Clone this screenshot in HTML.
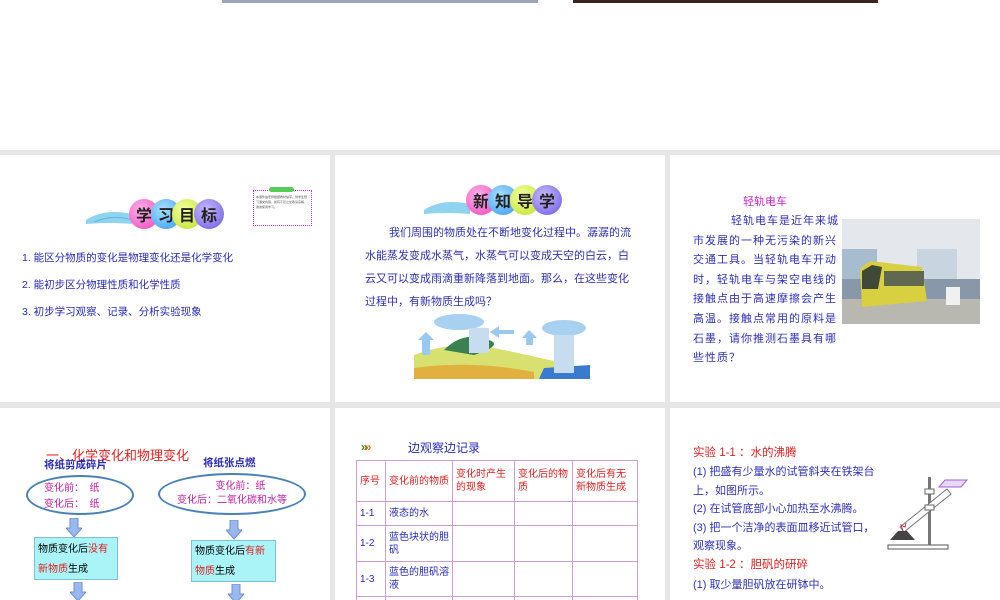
<!DOCTYPE html>
<html style="width:1000px;height:600px;overflow:hidden"><head><meta charset="utf-8">
<style>
*{margin:0;padding:0;box-sizing:border-box}
body{width:1000px;height:600px;background:#e6e6e6;position:relative;overflow:hidden;font-family:"Liberation Sans","Noto Sans CJK SC",sans-serif}
.s{position:absolute;background:#fff;overflow:hidden}
.a{position:absolute;white-space:nowrap}
.blue{color:#2a2ab8}
.red{color:#e02020}
.ball{position:absolute;width:30px;height:30px;border-radius:50%;font-size:16px;font-weight:bold;color:#222;text-align:center;line-height:30px;font-family:"Noto Sans CJK SC",sans-serif}
table{table-layout:fixed}
td{border:1px solid #c8a0d0;vertical-align:middle;padding:0 3px;font-size:10px;line-height:13px;white-space:normal;overflow:hidden}
</style></head><body>
<div class="s" style="left:0;top:0;width:1000px;height:150px"></div>
<div class="a" style="left:222px;top:0;width:316px;height:3px;background:#9aa6b8"></div>
<div class="a" style="left:573px;top:0;width:305px;height:3px;background:#3a2420"></div>

<!-- slide1 -->
<div class="s" style="left:0;top:155px;width:330px;height:247px"></div>
<svg class="a" style="left:84px;top:200px" width="50" height="30"><path d="M2 20 Q20 8 48 14 L48 24 Q25 22 2 24Z" fill="#8fd3ef"/><path d="M10 22 Q30 14 48 20" stroke="#5ab8e0" fill="none"/></svg>
<div class="ball" style="left:129px;top:199px;background:radial-gradient(circle at 40% 35%,#ffb0e8,#ee44bb)">学</div>
<div class="ball" style="left:151px;top:199px;background:radial-gradient(circle at 40% 35%,#a8e0ff,#3399ee)">习</div>
<div class="ball" style="left:172px;top:199px;background:radial-gradient(circle at 40% 35%,#f4ffa0,#bde022)">目</div>
<div class="ball" style="left:194px;top:199px;background:radial-gradient(circle at 40% 35%,#c8b8ff,#6a5ae0)">标</div>
<div class="a" style="left:253px;top:190px;width:59px;height:36px;border:1px dotted #cc33cc;font-size:3px;line-height:5px;color:#555;padding:4px 2px;white-space:normal">本课件由老师根据教材编写，供学生预习课文内容，如有不足之处敬请谅解，谢谢使用学习。</div>
<div class="a" style="left:269px;top:187px;width:25px;height:5px;background:#5c5;border-radius:3px"></div>
<div class="a blue" style="left:22px;top:250px;font-size:10.5px">1. 能区分物质的变化是物理变化还是化学变化</div>
<div class="a blue" style="left:22px;top:277px;font-size:10.5px">2. 能初步区分物理性质和化学性质</div>
<div class="a blue" style="left:22px;top:304px;font-size:10.5px">3. 初步学习观察、记录、分析实验现象</div>

<!-- slide2 -->
<div class="s" style="left:335px;top:155px;width:330px;height:247px"></div>
<svg class="a" style="left:422px;top:190px" width="50" height="30"><path d="M2 20 Q20 8 48 14 L48 24 Q25 22 2 24Z" fill="#8fd3ef"/></svg>
<div class="ball" style="left:466px;top:185px;background:radial-gradient(circle at 40% 35%,#ffb0e8,#ee44bb)">新</div>
<div class="ball" style="left:488px;top:185px;background:radial-gradient(circle at 40% 35%,#a8e0ff,#3399ee)">知</div>
<div class="ball" style="left:510px;top:185px;background:radial-gradient(circle at 40% 35%,#f4ffa0,#bde022)">导</div>
<div class="ball" style="left:532px;top:185px;background:radial-gradient(circle at 40% 35%,#c8b8ff,#6a5ae0)">学</div>
<div class="a" style="left:365px;top:222px;width:268px;font-size:11px;line-height:23px;white-space:normal;text-indent:24px;color:#3030b0">我们周围的物质处在不断地变化过程中。潺潺的流水能蒸发变成水蒸气，水蒸气可以变成天空的白云，白云又可以变成雨滴重新降落到地面。那么，在这些变化过程中，有新物质生成吗？</div>
<svg class="a" style="left:414px;top:310px" width="176" height="69">
<rect width="176" height="69" fill="#fff"/>
<path d="M0 45 Q40 30 80 38 Q130 48 176 60 L176 69 L0 69Z" fill="#d8e070"/>
<path d="M0 58 Q60 50 120 62 L120 69 L0 69Z" fill="#e0b040"/>
<path d="M130 58 L176 55 L176 69 L125 69Z" fill="#3a7ad0"/>
<path d="M30 40 Q50 20 75 30 Q90 35 60 45Z" fill="#3a8050"/>
<ellipse cx="45" cy="12" rx="25" ry="8" fill="#a8d0f0"/>
<ellipse cx="150" cy="18" rx="22" ry="8" fill="#a8d0f0"/>
<rect x="55" y="18" width="20" height="25" fill="#c8dcf0"/>
<rect x="140" y="25" width="20" height="38" fill="#c8dcf0"/>
<path d="M8 45 V30 H4 L12 22 L20 30 H16 V45Z" fill="#9ac8f0"/>
<path d="M112 35 V28 H108 L115 20 L123 28 H119 V35Z" fill="#9ac8f0"/>
<path d="M100 20 H85 V16 L76 22 L85 28 V24 H100Z" fill="#9ac8f0"/>
</svg>

<!-- slide3 -->
<div class="s" style="left:670px;top:155px;width:330px;height:247px"></div>
<div class="a" style="left:743px;top:193px;font-size:11px;color:#cc22cc">轻轨电车</div>
<div class="a" style="left:693px;top:212px;width:147px;font-size:11px;letter-spacing:1px;line-height:19.6px;white-space:normal;text-indent:38px;color:#3030b8">轻轨电车是近年来城市发展的一种无污染的新兴交通工具。当轻轨电车开动时，轻轨电车与架空电线的接触点由于高速摩擦会产生高温。接触点常用的原料是石墨，请你推测石墨具有哪些性质？</div>
<svg class="a" style="left:842px;top:219px" width="138" height="105">
<rect width="138" height="105" fill="#e4e8ec"/>
<rect x="0" y="30" width="35" height="45" fill="#a8bcd0"/>
<rect x="75" y="30" width="40" height="40" fill="#c8d4e0"/>
<rect x="0" y="60" width="138" height="20" fill="#8898a8"/>
<rect x="0" y="80" width="138" height="25" fill="#b8b8b0"/>
<path d="M18 50 L28 42 L80 48 L85 82 L20 88 Z" fill="#d8d040"/>
<path d="M20 52 L30 46 L40 48 L36 70 L20 70Z" fill="#404838"/>
<rect x="42" y="52" width="40" height="15" fill="#606850"/>
<rect x="104" y="68" width="14" height="18" fill="#f0f0f0"/>
</svg>

<!-- slide4 -->
<div class="s" style="left:0;top:408px;width:330px;height:192px"></div>
<div class="a" style="left:46px;top:445px;font-size:13px;color:#e82020">一、化学变化和物理变化</div>
<div class="a" style="left:44px;top:457px;font-size:10.5px;color:#2a2ab8;font-weight:bold">将纸剪成碎片</div>
<div class="a" style="left:203px;top:455px;font-size:10.5px;color:#2a2ab8;font-weight:bold">将纸张点燃</div>
<div class="a" style="left:26px;top:475px;width:108px;height:40px;border:2px solid #4a80b8;border-radius:50%"></div>
<div class="a" style="left:44px;top:481px;font-size:10px;line-height:16px;color:#c020a0">变化前：&nbsp;&nbsp;纸<br>变化后：&nbsp;&nbsp;纸</div>
<div class="a" style="left:158px;top:473px;width:148px;height:42px;border:2px solid #4a80b8;border-radius:50%"></div>
<div class="a" style="left:177px;top:480px;font-size:10px;line-height:14px;color:#c020a0;text-align:center">&nbsp;&nbsp;&nbsp;&nbsp;&nbsp;&nbsp;变化前：纸<br>变化后：二氧化碳和水等</div>
<svg class="a" style="left:66px;top:518px" width="16" height="20"><path d="M4 0 H12 V10 H16 L8 19 L0 10 H4Z" fill="#9ab8f0" stroke="#7090d0"/></svg>
<svg class="a" style="left:226px;top:520px" width="16" height="20"><path d="M4 0 H12 V10 H16 L8 19 L0 10 H4Z" fill="#9ab8f0" stroke="#7090d0"/></svg>
<div class="a" style="left:34px;top:537px;width:84px;height:43px;background:#aaf4f8;border:1px solid #80c0d0;font-size:10px;line-height:20px;padding:2px 3px;white-space:normal">物质变化后<span class="red">没有新物质</span>生成</div>
<div class="a" style="left:191px;top:540px;width:85px;height:42px;background:#aaf4f8;border:1px solid #80c0d0;font-size:10px;line-height:20px;padding:1px 3px;white-space:normal">物质变化后<span class="red">有新物质</span>生成</div>
<svg class="a" style="left:70px;top:582px" width="16" height="18"><path d="M4 0 H12 V10 H16 L8 19 L0 10 H4Z" fill="#9ab8f0" stroke="#7090d0"/></svg>
<svg class="a" style="left:228px;top:584px" width="16" height="16"><path d="M4 0 H12 V10 H16 L8 19 L0 10 H4Z" fill="#9ab8f0" stroke="#7090d0"/></svg>

<!-- slide5 -->
<div class="s" style="left:335px;top:408px;width:330px;height:192px">
<div class="a" style="left:26px;top:32px;font-size:12px;font-weight:bold;color:#e07010;letter-spacing:-3px"><span style="color:#408030">»</span>»</div>
<div class="a" style="left:73px;top:31px;font-size:12px;color:#2a2ab8">边观察边记录</div>
<table class="a" style="left:21px;top:52px;border-collapse:collapse;width:281px">
<colgroup><col style="width:29px"><col style="width:67px"><col style="width:62px"><col style="width:58px"><col style="width:65px"></colgroup>
<tr style="height:41px"><td class="red">序号</td><td class="red">变化前的物质</td><td class="red">变化时产生的现象</td><td class="red">变化后的物质</td><td class="red">变化后有无新物质生成</td></tr>
<tr style="height:24px"><td class="blue">1-1</td><td class="blue">液态的水</td><td></td><td></td><td></td></tr>
<tr style="height:36px"><td class="blue">1-2</td><td class="blue">蓝色块状的胆矾</td><td></td><td></td><td></td></tr>
<tr style="height:35px"><td class="blue">1-3</td><td class="blue">蓝色的胆矾溶液</td><td></td><td></td><td></td></tr>
<tr style="height:20px"><td></td><td></td><td></td><td></td><td></td></tr>
</table>
</div>

<!-- slide6 -->
<div class="s" style="left:670px;top:408px;width:330px;height:192px"></div>
<div class="a red" style="left:693px;top:444px;font-size:11.5px">实验 1-1 ：水的沸腾</div>
<div class="a" style="left:693px;top:463px;font-size:11px;line-height:18.5px;color:#3030b8">(1) 把盛有少量水的试管斜夹在铁架台<br>上，如图所示。<br>(2) 在试管底部小心加热至水沸腾。<br>(3) 把一个洁净的表面皿移近试管口，<br>观察现象。</div>
<div class="a red" style="left:693px;top:556px;font-size:11.5px">实验 1-2 ：胆矾的研碎</div>
<div class="a" style="left:693px;top:576px;font-size:11px;color:#3030b8">(1) 取少量胆矾放在研钵中。</div>
<svg class="a" style="left:885px;top:475px" width="90" height="80">
<rect x="3" y="70" width="60" height="4" fill="none" stroke="#555"/>
<rect x="43" y="2" width="3" height="68" fill="#777"/>
<path d="M15 52 L62 14 L66 19 L19 57Z" fill="#fff" stroke="#777"/>
<rect x="40" y="30" width="9" height="5" fill="#fff" stroke="#666"/>
<rect x="40" y="14" width="9" height="5" fill="#fff" stroke="#666"/>
<path d="M60 5 L82 5 L76 12 L54 12Z" fill="#e8d8f8" stroke="#a060d0"/>
<path d="M5 65 L13 56 H22 L30 65Z" fill="#444"/>
<path d="M18 56 L16 50 L20 52 L21 48" stroke="#d03050" fill="none"/>
</svg>
</body></html>
